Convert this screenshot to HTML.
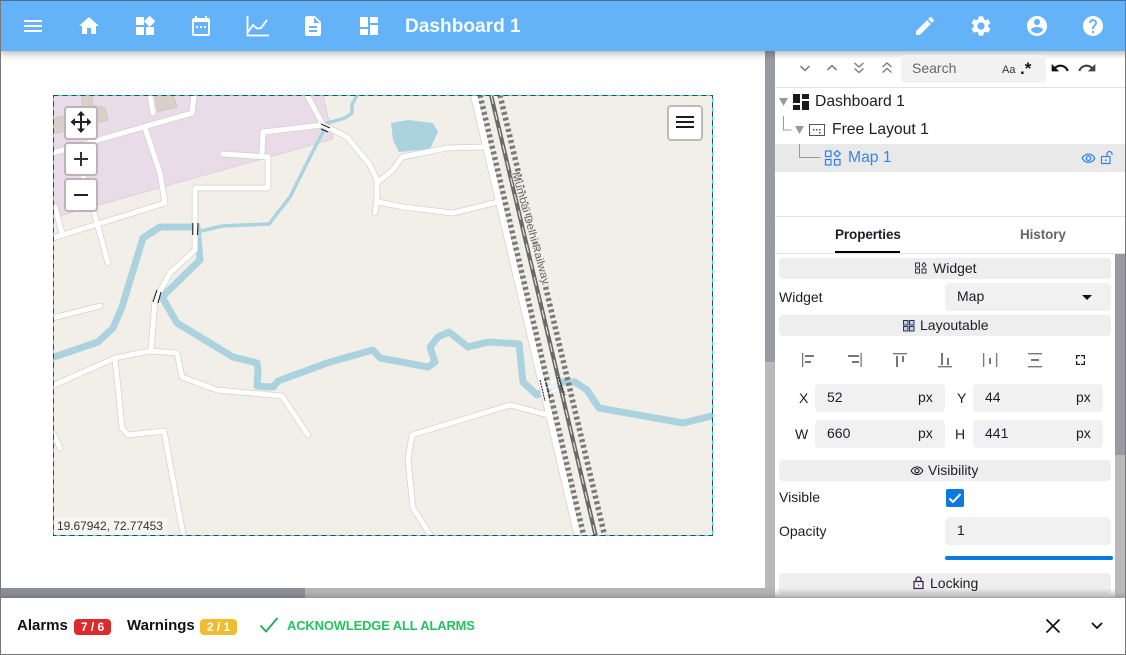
<!DOCTYPE html>
<html><head><meta charset="utf-8">
<style>
html,body{margin:0;padding:0;width:1126px;height:655px;overflow:hidden;background:#fff;font-family:"Liberation Sans",sans-serif;color:#1c1c28;font-size:14px}
.a{position:absolute;white-space:nowrap}
.t{position:absolute;white-space:nowrap;line-height:20px;height:20px}
svg.i{position:absolute;display:block}
.sec{position:absolute;left:779px;width:332px;height:21px;background:#eee;border-radius:4px}
.inp{position:absolute;background:#f1f1f1;border-radius:4px;height:28px}
</style></head>
<body>
<!-- canvas scrollbars -->
<div class="a" style="left:765px;top:51px;width:10px;height:311px;background:#9a9aa4"></div>
<div class="a" style="left:765px;top:362px;width:10px;height:236px;background:#b9b9b9"></div>
<div class="a" style="left:0;top:588px;width:305px;height:10px;background:#8e8e98"></div>
<div class="a" style="left:305px;top:588px;width:470px;height:10px;background:#b4b4b4"></div>

<!-- map -->
<svg class="a" style="left:0;top:0" width="1126" height="655" viewBox="0 0 1126 655">
<defs><clipPath id="m"><rect x="53" y="95" width="660" height="441"/></clipPath></defs>
<g clip-path="url(#m)" fill="none" stroke-linejoin="round" stroke-linecap="round">
<rect x="53" y="95" width="660" height="441" fill="#f2efe9"/>
<polygon points="53,95 323,95 333,139 60,216 53,218" fill="#e9dbe8" stroke="#d5c4d3" stroke-width=".6"/>
<polygon points="82,95 92,95 93,105 105,108 108,120 57,133 53,134 53,118 82,112" fill="#d9d0c9" stroke="#c8bdb5" stroke-width=".6"/>
<polygon points="155,95 173,95 177,107 158,112" fill="#d9d0c9" stroke="#c8bdb5" stroke-width=".6"/>
<polygon points="391,123 408,120 433,123 438,132 430,149 399,152 393,140" fill="#aad3df"/>
<!-- rivers -->
<g stroke="#aad3df">
<polyline stroke-width="3.500" points="197,232 222,226 269,224 290,197 312,153 323,132 327,123 345,118 352,113 352,105 357,95"/>
<polyline stroke-width="7" stroke-linejoin="round" points="45,360 98,342 113,328 122,307 143,238 160,227 197,227 200,260 162,297 177,323 233,357 257,363 258,370 257,386 273,387 278,381 330,362 373,350 380,358 428,367 435,362 430,347 438,337 449,332 468,347 488,342 519,344 523,382 537,395 563,382 575,382 587,390 599,408 683,423 720,414"/>
</g>
<!-- road casing -->
<g stroke="#d2cfca" stroke-width="6.400">
<polyline points="53,153 192,113 194,95"/><polyline points="150,95 153,113"/>
<polyline points="145,128 160,173 165,203 53,238"/><polyline points="83,175 97,223 108,263"/><polyline points="55,207 62,233"/>
<polyline points="307,95 323,125 263,132 262,153"/>
<polyline points="223,154 268,157 268,188 195,188 195,250 170,273 155,300 151,350"/>
<polyline points="323,125 347,137 370,165 377,180 377,200 375,213"/>
<polyline points="378,182 393,170 402,157 447,148 485,147"/>
<polyline points="378,202 403,207 453,213 498,202"/>
<polyline points="45,389 115,358 150,351 177,353 182,377 217,390 282,396 308,435"/>
<polyline points="115,358 122,428 128,435 164,431 185,545"/>
<polyline points="53,433 60,448"/><polyline points="45,320 100,306"/>
<polyline points="548,415 510,405 412,435 408,460 413,508 437,545"/>
<line x1="473" y1="90" x2="580" y2="545" stroke-width="8"/>
</g>
<!-- road fill -->
<g stroke="#fff" stroke-width="5">
<polyline points="53,153 192,113 194,95"/><polyline points="150,95 153,113"/>
<polyline points="145,128 160,173 165,203 53,238"/><polyline points="83,175 97,223 108,263"/><polyline points="55,207 62,233"/>
<polyline points="307,95 323,125 263,132 262,153"/>
<polyline points="223,154 268,157 268,188 195,188 195,250 170,273 155,300 151,350"/>
<polyline points="323,125 347,137 370,165 377,180 377,200 375,213"/>
<polyline points="378,182 393,170 402,157 447,148 485,147"/>
<polyline points="378,202 403,207 453,213 498,202"/>
<polyline points="45,389 115,358 150,351 177,353 182,377 217,390 282,396 308,435"/>
<polyline points="115,358 122,428 128,435 164,431 185,545"/>
<polyline points="53,433 60,448"/><polyline points="45,320 100,306"/>
<polyline points="548,415 510,405 412,435 408,460 413,508 437,545"/>
<line x1="473" y1="90" x2="580" y2="545" stroke-width="6.600"/>
</g>
<!-- railway -->
<g stroke-linecap="butt">
<line x1="480" y1="95" x2="584" y2="537" stroke="#7a7a7a" stroke-width="5.500" stroke-dasharray="3 2.800"/>
<line x1="500" y1="95" x2="605" y2="537" stroke="#7a7a7a" stroke-width="5.500" stroke-dasharray="3 2.800"/>
<line x1="491" y1="95" x2="596" y2="537" stroke="#6a6a6a" stroke-width="4.200"/>
<line x1="491" y1="95" x2="596" y2="537" stroke="#f2efe9" stroke-width="1" stroke-dasharray="9 8"/>
<!-- bridges -->
<g stroke="#222" stroke-width="1.100">
<line x1="192.800" y1="223" x2="192.800" y2="235"/><line x1="198" y1="223" x2="197.500" y2="235"/>
<line x1="157" y1="290" x2="153" y2="302"/><line x1="161" y1="292" x2="158" y2="303"/>
<line x1="321" y1="124" x2="330" y2="128"/><line x1="321" y1="129" x2="328" y2="132"/>
<line x1="540" y1="380" x2="545" y2="401" stroke-dasharray="2 1"/><line x1="545" y1="379" x2="550" y2="399" stroke-dasharray="2 1"/>
<line x1="558" y1="377" x2="565" y2="395" stroke-dasharray="2 1"/>
</g>
<polygon points="547,382 556,380 558,390 550,393" fill="#fff" opacity=".8"/>
</g>
<text x="0" y="0" transform="translate(512,173) rotate(74.500)" font-family="'Liberation Sans',sans-serif" font-size="11" fill="#666" stroke="#f2efe9" stroke-width="2" paint-order="stroke" textLength="116" lengthAdjust="spacingAndGlyphs">Mumbai Delhi Railway</text>
<rect x="54" y="518" width="113" height="17" fill="#fff" fill-opacity=".4" stroke="none"/>
</g>
<!-- selection border -->
<g fill="none" stroke-width="1">
<rect x="53.500" y="95.500" width="659" height="440" stroke="#12e8f2"/>
<rect x="53.500" y="95.500" width="659" height="440" stroke="#443e3e" stroke-dasharray="5 4"/>
</g>
</svg>
<div class="t" style="left:57px;top:516px;font-size:12px;letter-spacing:-.05px;color:#333">19.67942, 72.77453</div>

<!-- map controls -->
<div class="a" style="left:64px;top:106px;width:30px;height:30px;background:#fff;border:2px solid #c0b1bd;border-radius:4px"></div>
<div class="a" style="left:64px;top:142px;width:30px;height:30px;background:#fff;border:2px solid #c0b1bd;border-radius:4px"></div>
<div class="a" style="left:64px;top:178px;width:30px;height:30px;background:#fff;border:2px solid #c0b1bd;border-radius:4px"></div>
<div class="a" style="left:667px;top:105px;width:32px;height:32px;background:#fff;border:2px solid #bdbab5;border-radius:4px"></div>
<svg class="i" style="left:69px;top:110px" width="24" height="24" viewBox="0 0 24 24" fill="#222"><path d="M11 4h2v16h-2zM3 11h18v2H3z"/><path d="M12 1l4 4.500H8zM12 23l-4-4.500h8zM1.500 12l4.500-4v8zM22.500 12L18 16V8z"/></svg>
<svg class="i" style="left:69px;top:147px" width="24" height="24" viewBox="0 0 24 24" fill="#333"><path d="M11 5h2v14h-2zM5 11h14v2H5z"/></svg>
<svg class="i" style="left:69px;top:183px" width="24" height="24" viewBox="0 0 24 24" fill="#222"><path d="M5 11h14v2H5z"/></svg>
<svg class="i" style="left:673px;top:110px" width="24" height="24" viewBox="0 0 24 24" fill="#1c1c1c"><path d="M3 18h18v-2H3zm0-5h18v-2H3zm0-7v2h18V6z"/></svg>

<!-- header -->
<div class="a" style="left:0;top:0;width:1126px;height:51px;background:#64b2f7;box-shadow:0 2px 8px rgba(0,0,0,.35);border-top:1px solid #4c6c9c;box-sizing:border-box"></div>
<svg class="i" style="left:21px;top:14px" width="24" height="24" viewBox="0 0 24 24" fill="#fff"><path d="M3 18h18v-2H3v2zm0-5h18v-2H3v2zm0-7v2h18V6H3z"/></svg>
<svg class="i" style="left:77px;top:14px" width="24" height="24" viewBox="0 0 24 24" fill="#fff"><path d="M10 20v-6h4v6h5v-8h3L12 3 2 12h3v8z"/></svg>
<svg class="i" style="left:133px;top:14px" width="24" height="24" viewBox="0 0 24 24" fill="#fff"><path d="M13 13v8h8v-8h-8zM3 21h8v-8H3v8zM3 3v8h8V3H3zm13.660-1.310L11 7.340 16.660 13l5.660-5.660-5.660-5.650z"/></svg>
<svg class="i" style="left:189px;top:14px" width="24" height="24" viewBox="0 0 24 24" fill="#fff"><path d="M19 4h-1V2h-2v2H8V2H6v2H5c-1.110 0-1.990.900-1.990 2L3 20a2 2 0 0 0 2 2h14c1.100 0 2-.900 2-2V6c0-1.100-.900-2-2-2zm0 16H5V8h14v12zM9 14H7v-2h2v2zm4 0h-2v-2h2v2zm4 0h-2v-2h2v2z"/></svg>
<svg class="i" style="left:246px;top:14px" width="24" height="24" viewBox="0 0 24 24" fill="none" stroke="#fff" stroke-width="1.800"><path d="M1.500 2v19.500H23"/><path d="M2 18l5-7 4 3.500 4-.5 6-8"/></svg>
<svg class="i" style="left:301px;top:14px" width="24" height="24" viewBox="0 0 24 24" fill="#fff"><path d="M14 2H6c-1.100 0-1.990.900-1.990 2L4 20c0 1.100.890 2 1.990 2H18c1.100 0 2-.900 2-2V8l-6-6zm2 16H8v-2h8v2zm0-4H8v-2h8v2zm-3-5V3.500L18.500 9H13z"/></svg>
<svg class="i" style="left:357px;top:14px" width="24" height="24" viewBox="0 0 24 24" fill="#fff"><path d="M3 13h8V3H3v10zm0 8h8v-6H3v6zm10 0h8V11h-8v10zm0-18v6h8V3h-8z"/></svg>
<div class="t" style="left:405px;top:17px;font-size:19.100px;color:#fff;font-weight:700;opacity:.95">Dashboard 1</div>
<svg class="i" style="left:913px;top:14px" width="24" height="24" viewBox="0 0 24 24" fill="#fff"><path d="M3 17.250V21h3.750L17.810 9.940l-3.750-3.750L3 17.250zM20.710 7.040c.390-.390.390-1.020 0-1.410l-2.340-2.340c-.390-.390-1.020-.390-1.410 0l-1.830 1.830 3.750 3.750 1.830-1.830z"/></svg>
<svg class="i" style="left:969px;top:14px" width="24" height="24" viewBox="0 0 24 24" fill="#fff"><path d="M19.140 12.940c.040-.300.060-.610.060-.940 0-.320-.020-.640-.070-.940l2.030-1.580c.180-.140.230-.410.120-.610l-1.920-3.320c-.120-.220-.370-.290-.590-.220l-2.390.960c-.500-.380-1.030-.700-1.620-.940l-.360-2.540c-.040-.240-.240-.410-.480-.410h-3.840c-.240 0-.430.170-.470.410l-.360 2.540c-.590.240-1.130.570-1.620.940l-2.390-.960c-.220-.080-.470 0-.590.220L2.740 8.870c-.120.210-.080.470.120.610l2.030 1.580c-.050.300-.090.630-.090.940s.020.640.070.940l-2.030 1.580c-.180.140-.230.410-.12.610l1.920 3.320c.120.220.370.290.590.220l2.390-.960c.500.380 1.030.700 1.620.940l.360 2.540c.050.240.240.410.480.410h3.840c.240 0 .440-.170.470-.410l.360-2.540c.590-.240 1.130-.560 1.620-.940l2.390.960c.220.080.470 0 .590-.220l1.920-3.320c.120-.220.070-.470-.120-.610l-2.010-1.580zM12 15.600c-1.980 0-3.600-1.620-3.600-3.600s1.620-3.600 3.600-3.600 3.600 1.620 3.600 3.600-1.620 3.600-3.600 3.600z"/></svg>
<svg class="i" style="left:1025px;top:14px" width="24" height="24" viewBox="0 0 24 24" fill="#fff"><path d="M12 2C6.480 2 2 6.480 2 12s4.480 10 10 10 10-4.480 10-10S17.520 2 12 2zm0 3c1.660 0 3 1.340 3 3s-1.340 3-3 3-3-1.340-3-3 1.340-3 3-3zm0 14.200c-2.500 0-4.710-1.280-6-3.220.030-1.990 4-3.080 6-3.080 1.990 0 5.970 1.090 6 3.080-1.290 1.940-3.500 3.220-6 3.220z"/></svg>
<svg class="i" style="left:1081px;top:14px" width="24" height="24" viewBox="0 0 24 24" fill="#fff"><path d="M12 2C6.480 2 2 6.480 2 12s4.480 10 10 10 10-4.480 10-10S17.520 2 12 2zm1 17h-2v-2h2v2zm2.070-7.750l-.900.920C13.450 12.900 13 13.500 13 15h-2v-.500c0-1.100.450-2.100 1.170-2.830l1.240-1.260c.370-.360.590-.860.590-1.410 0-1.100-.900-2-2-2s-2 .900-2 2H8c0-2.210 1.790-4 4-4s4 1.790 4 4c0 .880-.360 1.680-.930 2.250z"/></svg>

<!-- right panel -->
<div class="a" style="left:775px;top:51px;width:350px;height:547px;background:#fff;z-index:0"></div>
<div class="a" style="left:775px;top:51px;width:350px;height:547px;z-index:1">
<div class="a" style="left:0;top:0;width:350px;height:8px;background:linear-gradient(rgba(0,0,0,.22),rgba(0,0,0,0))"></div>
<div class="a" style="left:340px;top:203px;width:10px;height:201px;background:#9a9aa4"></div>
<div class="a" style="left:340px;top:404px;width:10px;height:143px;background:#b9b9b9"></div>
</div>
<div class="a" style="left:0;top:0;width:1126px;height:655px;z-index:2">
<!-- toolbar -->
<svg class="i" style="left:797px;top:60px" width="16" height="16" viewBox="0 0 16 16" fill="none" stroke="#777" stroke-width="1.500"><path d="M3.500 6l4.500 4.500L12.500 6"/></svg>
<svg class="i" style="left:824px;top:60px" width="16" height="16" viewBox="0 0 16 16" fill="none" stroke="#777" stroke-width="1.500"><path d="M3.500 10L8 5.500 12.500 10"/></svg>
<svg class="i" style="left:851px;top:60px" width="16" height="16" viewBox="0 0 16 16" fill="none" stroke="#777" stroke-width="1.300"><path d="M3.500 3l4.500 4 4.500-4M3.500 8.500l4.500 4 4.500-4"/></svg>
<svg class="i" style="left:879px;top:60px" width="16" height="16" viewBox="0 0 16 16" fill="none" stroke="#777" stroke-width="1.300"><path d="M3.500 7L8 3l4.500 4M3.500 12.500l4.500-4 4.500 4"/></svg>
<div class="a" style="left:901px;top:55px;width:145px;height:28px;background:#f2f2f2;border-radius:4px"></div>
<div class="t" style="left:912px;top:58px;color:#666">Search</div>
<div class="t" style="left:1002px;top:60px;font-size:11px;color:#333">Aa</div>
<div class="a" style="left:1020px;top:60px;font-size:17px;line-height:18px;color:#111;font-weight:700">.*</div>
<svg class="i" style="left:1050px;top:58px" width="20" height="20" viewBox="0 0 24 24" fill="#111"><path d="M12.500 8c-2.650 0-5.050.990-6.900 2.600L2 7v9h9l-3.620-3.620c1.390-1.160 3.160-1.880 5.120-1.880 3.540 0 6.550 2.310 7.600 5.500l2.370-.780C21.080 11.030 17.150 8 12.500 8z"/></svg>
<svg class="i" style="left:1077px;top:58px" width="20" height="20" viewBox="0 0 24 24" fill="#444"><path d="M18.400 10.600C16.550 8.990 14.150 8 11.500 8c-4.650 0-8.580 3.030-9.960 7.220L3.900 16c1.050-3.190 4.050-5.500 7.600-5.500 1.950 0 3.730.720 5.120 1.880L13 16h9V7l-3.600 3.600z"/></svg>
<div class="a" style="left:775px;top:87px;width:350px;height:1px;background:#e2e2e2"></div>

<!-- tree -->
<div class="a" style="left:775px;top:144px;width:350px;height:28px;background:#e9e9e9"></div>
<svg class="a" style="left:775px;top:88px" width="60" height="84" viewBox="775 88 60 84">
<path d="M779 98h9l-4.500 8zM795 126h9l-4.500 8z" fill="#9a9a9a"/>
<path d="M783.500 116v14h8M799.500 144v13.500h21" fill="none" stroke="#999" stroke-width="1"/>
<path d="M793 94h7v9h-7zM793 105h7v5h-7zM802 94h7v5h-7zM802 101h7v9h-7z" fill="#1a1a1a"/>
<rect x="809.500" y="124.500" width="15" height="11" fill="none" stroke="#555" stroke-width="1"/>
<path d="M813 129h1.500v1.500H813zM816 129h1.500v1.500H816zM819 129h1.500v1.500H819zM819 132h1.500v1.500H819z" fill="#555"/>
</svg>
<div class="t" style="left:815px;top:92px;font-size:15.700px">Dashboard 1</div>
<div class="t" style="left:832px;top:120px;font-size:15.700px">Free Layout 1</div>
<svg class="i" style="left:824px;top:149px" width="18" height="18" viewBox="0 0 18 18" fill="none" stroke="#2f80ed" stroke-width="1.200"><rect x="1.500" y="2" width="5.500" height="5.500"/><rect x="1.500" y="10.500" width="5.500" height="5.500"/><rect x="10.500" y="10.500" width="5.500" height="5.500"/><path d="M13.200 1.500l3.200 3.200-3.200 3.200L10 4.700z"/></svg>
<div class="t" style="left:848px;top:148px;font-size:15.700px;color:#3a86e8">Map 1</div>
<svg class="i" style="left:1081px;top:151px" width="15" height="15" viewBox="0 0 24 24" fill="#2f80ed"><path d="M12 6c3.790 0 7.170 2.130 8.820 5.500C19.170 14.870 15.790 17 12 17s-7.170-2.130-8.820-5.500C4.830 8.130 8.210 6 12 6m0-2C7 4 2.730 7.110 1 11.500 2.730 15.890 7 19 12 19s9.270-3.110 11-7.500C21.270 7.110 17 4 12 4zm0 5a2.500 2.500 0 1 1 0 5 2.500 2.500 0 0 1 0-5m0-2c-2.480 0-4.500 2.020-4.500 4.500S9.520 16 12 16s4.500-2.020 4.500-4.500S14.480 7 12 7z"/></svg>
<svg class="i" style="left:1100px;top:150px" width="15" height="15" viewBox="0 0 15 15" fill="none" stroke="#2f80ed" stroke-width="1.200"><rect x="1.500" y="6.500" width="8.500" height="7"/><path d="M7 6.500V4a2.500 2.500 0 0 1 5 0v1"/><path d="M5 9.500h1.500v1.500H5z" fill="#2f80ed" stroke="none"/></svg>
<div class="a" style="left:775px;top:216px;width:350px;height:1px;background:#e2e2e2"></div>

<!-- tabs -->
<div class="t" style="left:835px;top:225px;font-weight:700;font-size:13.500px;letter-spacing:-.1px">Properties</div>
<div class="t" style="left:1020px;top:225px;font-weight:700;font-size:13.500px;color:#666;letter-spacing:-.1px">History</div>
<div class="a" style="left:835px;top:251px;width:65px;height:2px;background:#000"></div>
<div class="a" style="left:775px;top:253px;width:350px;height:1px;background:#e2e2e2"></div>

<!-- Widget -->
<div class="sec" style="top:258px"></div>
<svg class="i" style="left:915px;top:262px" width="12" height="12" viewBox="0 0 12 12" fill="none" stroke="#334" stroke-width="1"><rect x=".5" y="1" width="4" height="4"/><rect x=".5" y="7" width="4" height="4"/><rect x="7" y="7" width="4" height="4"/><path d="M9 .5L11 3 9 5.500 7 3z"/></svg>
<div class="t" style="left:933px;top:258px">Widget</div>
<div class="t" style="left:779px;top:287px">Widget</div>
<div class="inp" style="left:945px;top:283px;width:166px"></div>
<div class="t" style="left:957px;top:286px">Map</div>
<div class="a" style="left:1082px;top:295px;width:0;height:0;border-left:5px solid transparent;border-right:5px solid transparent;border-top:5px solid #111"></div>

<!-- Layoutable -->
<div class="sec" style="top:315px"></div>
<svg class="i" style="left:903px;top:320px" width="12" height="12" viewBox="0 0 12 12" fill="#b9d3ea" stroke="#335" stroke-width="1"><rect x=".5" y=".5" width="4.500" height="4.500"/><rect x="6.500" y=".5" width="4.500" height="4.500"/><rect x=".5" y="6.500" width="4.500" height="4.500"/><rect x="6.500" y="6.500" width="4.500" height="4.500"/></svg>
<div class="t" style="left:920px;top:315px">Layoutable</div>
<svg class="a" style="left:795px;top:350px" width="300" height="20" viewBox="795 350 300 20" fill="#777">
<path d="M802 353h1.300v14H802zM805 355h9v2h-9zM805 361h6v2h-6z"/>
<path d="M860.500 353h1.300v14h-1.300zM848 355h11v2h-11zM852 361h7v2h-7z"/>
<path d="M893 353h14v1.400h-14zM896 356h2v11h-2zM902 356h2v6h-2z"/>
<path d="M938 366h14v1.400h-14zM941 353h2v12h-2zM947 358h2v7h-2z"/>
<path d="M983 353h1.300v14H983zM996 353h1.300v14H996zM989 358h2v6h-2z"/>
<path d="M1028 353h14v1.400h-14zM1028 366h14v1.400h-14zM1031 359h8v2h-8z"/>
<path d="M1076 355h4v1.300h-2.700V359H1076zM1081 355h4v4h-1.300v-2.700H1081zM1076 361h1.300v2.700h2.700V365h-4zM1083.700 361h1.300v4h-4v-1.300h2.700z" fill="#222"/>
</svg>
<div class="t" style="left:799px;top:388px">X</div>
<div class="inp" style="left:815px;top:384px;width:130px"></div>
<div class="t" style="left:827px;top:387px">52</div>
<div class="t" style="left:918px;top:387px">px</div>
<div class="t" style="left:957px;top:388px">Y</div>
<div class="inp" style="left:973px;top:384px;width:130px"></div>
<div class="t" style="left:985px;top:387px">44</div>
<div class="t" style="left:1076px;top:387px">px</div>
<div class="t" style="left:795px;top:424px">W</div>
<div class="inp" style="left:815px;top:420px;width:130px"></div>
<div class="t" style="left:827px;top:423px">660</div>
<div class="t" style="left:918px;top:423px">px</div>
<div class="t" style="left:955px;top:424px">H</div>
<div class="inp" style="left:973px;top:420px;width:130px"></div>
<div class="t" style="left:985px;top:423px">441</div>
<div class="t" style="left:1076px;top:423px">px</div>

<!-- Visibility -->
<div class="sec" style="top:460px"></div>
<svg class="i" style="left:910px;top:464px" width="14" height="14" viewBox="0 0 24 24" fill="#223"><path d="M12 6c3.790 0 7.170 2.130 8.820 5.500C19.170 14.870 15.790 17 12 17s-7.170-2.130-8.820-5.500C4.830 8.130 8.210 6 12 6m0-2C7 4 2.730 7.110 1 11.500 2.730 15.890 7 19 12 19s9.270-3.110 11-7.500C21.270 7.110 17 4 12 4zm0 5a2.500 2.500 0 1 1 0 5 2.500 2.500 0 0 1 0-5m0-2c-2.480 0-4.500 2.020-4.500 4.500S9.520 16 12 16s4.500-2.020 4.500-4.500S14.480 7 12 7z"/></svg>
<div class="t" style="left:928px;top:460px">Visibility</div>
<div class="t" style="left:779px;top:487px">Visible</div>
<div class="a" style="left:946px;top:489px;width:18px;height:18px;background:#0b7ae0;border-radius:2px"></div>
<svg class="i" style="left:946px;top:489px" width="18" height="18" viewBox="0 0 18 18" fill="none" stroke="#fff" stroke-width="2"><path d="M3.500 9.500l3.500 3.500 7.500-8"/></svg>
<div class="t" style="left:779px;top:521px">Opacity</div>
<div class="inp" style="left:945px;top:517px;width:166px"></div>
<div class="t" style="left:957px;top:520px">1</div>
<div class="a" style="left:945px;top:556px;width:168px;height:4px;background:#0b7ae0;border-radius:2px"></div>

<!-- Locking -->
<div class="sec" style="top:573px"></div>
<svg class="i" style="left:911px;top:575px" width="15" height="15" viewBox="0 0 15 15" fill="none" stroke="#2a2040" stroke-width="1.200"><rect x="3" y="6.500" width="9" height="7"/><path d="M5 6.500V4.500a2.500 2.500 0 0 1 5 0v2"/><path d="M7 9.500h1.200v1.200H7z" fill="#2a2040" stroke="none"/></svg>
<div class="t" style="left:930px;top:573px">Locking</div>
<div class="a" style="left:775px;top:588px;width:340px;height:10px;background:linear-gradient(rgba(0,0,0,0),rgba(0,0,0,.22))"></div>

<!-- bottom bar -->
<div class="a" style="left:0;top:598px;width:1126px;height:57px;background:#fff;box-shadow:0 -1px 6px rgba(0,0,0,.25)"></div>
<div class="t" style="left:17px;top:616px;font-weight:700;font-size:15px;color:#111">Alarms</div>
<div class="a" style="left:74px;top:619px;width:37px;height:16px;background:#dc2b2f;border-radius:4px;color:#fff;font-size:12px;font-weight:700;line-height:16px;text-align:center">7 / 6</div>
<div class="t" style="left:127px;top:616px;font-weight:700;font-size:15px;color:#111">Warnings</div>
<div class="a" style="left:200px;top:619px;width:37px;height:16px;background:#f0bd30;border-radius:4px;color:#fff;font-size:12px;font-weight:700;line-height:16px;text-align:center">2 / 1</div>
<svg class="i" style="left:258px;top:616px" width="22" height="18" viewBox="0 0 22 18" fill="none" stroke="#1faa55" stroke-width="1.800"><path d="M2.500 9.500l5.500 6L19.500 2"/></svg>
<div class="t" style="left:287px;top:615.500px;font-size:12.900px;font-weight:700;color:#22c35e;letter-spacing:-.1px">ACKNOWLEDGE ALL ALARMS</div>
<svg class="i" style="left:1043px;top:616px" width="20" height="20" viewBox="0 0 20 20" fill="none" stroke="#111" stroke-width="1.800"><path d="M3.500 3.500l13 13M16.500 3.500l-13 13"/></svg>
<svg class="i" style="left:1089px;top:617px" width="16" height="16" viewBox="0 0 16 16" fill="none" stroke="#111" stroke-width="1.800"><path d="M3 6l5 5 5-5"/></svg>
</div>

<!-- window frame -->
<div class="a" style="left:0;top:0;width:1126px;height:655px;box-sizing:border-box;border:1px solid #777;border-top-color:#4c6c9c;z-index:5"></div>
</body></html>
